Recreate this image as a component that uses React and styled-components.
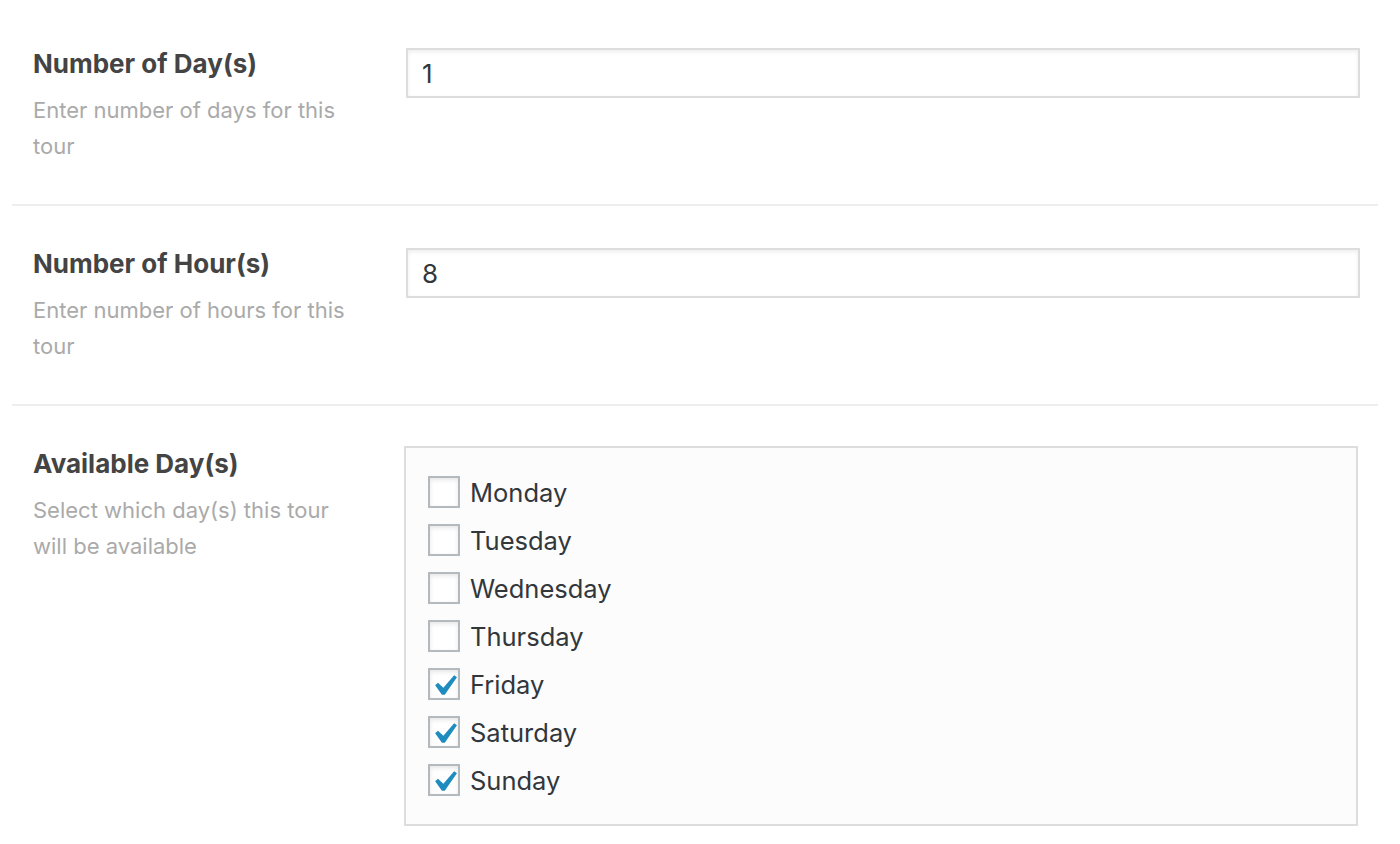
import React from "react";
import styled, { createGlobalStyle } from "styled-components";

const Global = createGlobalStyle`
  html, body { margin: 0; padding: 0; background: #fff; }
  body { font-family: Inter, "Liberation Sans", Arial, sans-serif; }
`;

const Page = styled.div`
  padding: 6px 22px 0 12px;
`;

const Row = styled.div`
  display: flex;
  padding: 42px 0 40px 21px;
  border-bottom: ${(p) => (p.$last ? "none" : "2px solid #eeeeee")};
`;

const LabelCol = styled.div`
  width: 373px;
  flex-shrink: 0;
`;

const Title = styled.div`
  font-size: 26px;
  line-height: 32px;
  font-weight: 700;
  color: #444444;
`;

const Desc = styled.div`
  margin-top: 12px;
  font-size: 22px;
  line-height: 36px;
  color: #aaaaaa;
  width: 325px;
`;

const FieldCol = styled.div`
  flex: 1;
  min-width: 0;
  margin-right: 18px;
`;

const TextInput = styled.input`
  box-sizing: border-box;
  width: 100%;
  height: 50px;
  border: 2px solid #dddddd;
  box-shadow: inset 0 2px 4px rgba(0, 0, 0, 0.07);
  background: #fff;
  padding: 0 14px;
  font-family: Inter, "Liberation Sans", Arial, sans-serif;
  font-size: 26px;
  color: #32373c;
  outline: none;
  margin: 0;
`;

const CheckBox = styled.div`
  box-sizing: border-box;
  margin: -2px 2px 0 -2px;
  border: 2px solid #dddddd;
  background: #fcfcfc;
  padding: 20px 22px;
`;

const Option = styled.label`
  display: flex;
  align-items: center;
  height: 48px;
  font-size: 25.5px;
  color: #32373c;
`;

const Box = styled.span`
  position: relative;
  box-sizing: border-box;
  width: 32px;
  height: 32px;
  border: 2px solid #b4b9be;
  background: #fff;
  box-shadow: inset 0 2px 4px rgba(0, 0, 0, 0.1);
  margin-right: 10px;
  flex-shrink: 0;
`;

const Tick = styled.svg`
  position: absolute;
  left: -7px;
  top: -5px;
  width: 42px;
  height: 42px;
`;

const days = [
  ["Monday", false],
  ["Tuesday", false],
  ["Wednesday", false],
  ["Thursday", false],
  ["Friday", true],
  ["Saturday", true],
  ["Sunday", true],
];

export default function App() {
  return (
    <>
      <Global />
      <Page>
        <Row>
          <LabelCol>
            <Title>Number of Day(s)</Title>
            <Desc>Enter number of days for this tour</Desc>
          </LabelCol>
          <FieldCol>
            <TextInput defaultValue="1" />
          </FieldCol>
        </Row>
        <Row>
          <LabelCol>
            <Title>Number of Hour(s)</Title>
            <Desc>Enter number of hours for this tour</Desc>
          </LabelCol>
          <FieldCol>
            <TextInput defaultValue="8" />
          </FieldCol>
        </Row>
        <Row $last>
          <LabelCol>
            <Title>Available Day(s)</Title>
            <Desc>Select which day(s) this tour will be available</Desc>
          </LabelCol>
          <FieldCol>
            <CheckBox>
              {days.map(([d, on]) => (
                <Option key={d}>
                  <Box>
                    {on && (
                      <Tick viewBox="0 0 20 20">
                        <path
                          fill="#1e8cbe"
                          d="M14.83 4.89l1.34.94-5.81 8.38H9.02L5.78 9.67l1.34-1.25 2.57 2.4z"
                        />
                      </Tick>
                    )}
                  </Box>
                  {d}
                </Option>
              ))}
            </CheckBox>
          </FieldCol>
        </Row>
      </Page>
    </>
  );
}
